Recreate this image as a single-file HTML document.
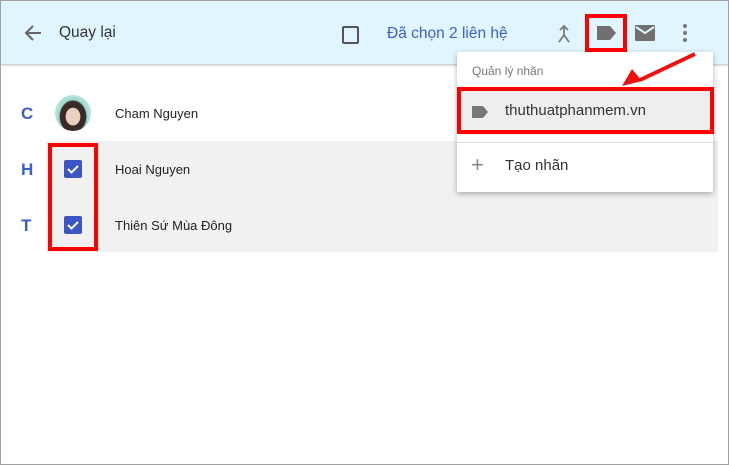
<!DOCTYPE html>
<html><head><meta charset="utf-8"><style>
*{margin:0;padding:0;box-sizing:border-box}
body{width:729px;height:465px;position:relative;background:#fff;font-family:"Liberation Sans",Arial,sans-serif;overflow:hidden}
.frame{position:absolute;left:0;top:0;width:729px;height:465px;border:1px solid #a0a0a0}
.hdr{position:absolute;left:1px;top:1px;width:727px;height:64px;background:#e1f5fe;border-bottom:1px solid #c8d4da;box-shadow:0 1px 2px rgba(0,0,0,.15)}
.t{position:absolute;white-space:nowrap}
.red{position:absolute;border:4px solid #ff0000}
.gray{position:absolute;left:46px;width:672px;background:#f1f1f1}
.letter{position:absolute;left:21px;font-weight:bold;color:#3c5fce;font-size:17px}
.name{position:absolute;left:115px;font-size:13px;color:#222}
.cb{position:absolute;left:64px;width:18px;height:18px;background:#3a56c7;border-radius:2px}
.menu{position:absolute;left:457px;top:52px;width:256px;height:140px;background:#fff;box-shadow:0 2px 6px rgba(0,0,0,.3);border-radius:2px}
</style></head><body>
<div class="hdr"></div>
<svg class="t" style="left:23px;top:23px" width="20" height="20" viewBox="0 0 20 20"><path d="M18 10H3M10 3L3 10l7 7" stroke="#666" stroke-width="2" fill="none"/></svg>
<div class="t" style="left:59px;top:24px;font-size:15.5px;color:#333">Quay lại</div>
<div class="t" style="left:342px;top:26px;width:17px;height:18px;border:2px solid #555;border-radius:2px"></div>
<div class="t" style="left:387px;top:25px;font-size:15.5px;color:#3b5fd0">Đã chọn 2 liên hệ</div>
<svg class="t" style="left:556px;top:24px" width="16" height="20" viewBox="0 0 16 20"><path d="M8 2v10M4 6l4-4 4 4M8 11l-5 7M8 11l5 7" stroke="#777" stroke-width="1.8" fill="none"/></svg>
<div class="red" style="left:585px;top:14px;width:42px;height:38px"></div>
<svg class="t" style="left:595px;top:25px" width="22" height="16" viewBox="0 0 22 16"><path d="M2 1h13l6 7-6 7H2z" fill="#707070"/></svg>
<svg class="t" style="left:634px;top:24px" width="22" height="18" viewBox="0 0 22 18"><rect x="1" y="1" width="20" height="16" rx="1" fill="#707070"/><path d="M2 3l9 6 9-6" stroke="#e1f5fe" stroke-width="2" fill="none"/></svg>
<svg class="t" style="left:681px;top:23px" width="8" height="20" viewBox="0 0 8 20"><circle cx="4" cy="3" r="2" fill="#777"/><circle cx="4" cy="10" r="2" fill="#777"/><circle cx="4" cy="17" r="2" fill="#777"/></svg>

<div class="gray" style="top:141px;height:111px"></div>
<div class="letter" style="top:104px">C</div>
<div class="letter" style="top:160px">H</div>
<div class="letter" style="top:216px">T</div>
<div class="t" style="left:55px;top:95px;width:36px;height:36px;border-radius:50%;background:radial-gradient(ellipse at 50% 60%,#e9d0c0 0 28%,#3a2a28 30% 50%,#9ad9cc 55%,#c9ece6 80%)"></div>
<div class="name" style="top:106px">Cham Nguyen</div>
<div class="name" style="top:162px">Hoai Nguyen</div>
<div class="name" style="top:218px">Thiên Sứ Mùa Đông</div>
<div class="cb" style="top:160px"></div><div class="cb" style="top:216px"></div>
<svg class="t" style="left:64px;top:160px" width="18" height="18"><path d="M4 9l3.5 3.5L14 6" stroke="#fff" stroke-width="2" fill="none"/></svg>
<svg class="t" style="left:64px;top:216px" width="18" height="18"><path d="M4 9l3.5 3.5L14 6" stroke="#fff" stroke-width="2" fill="none"/></svg>
<div class="red" style="left:48px;top:143px;width:50px;height:108px"></div>

<div class="menu">
<div class="t" style="left:15px;top:12px;font-size:12px;color:#777">Quản lý nhãn</div>
<div class="t" style="left:4px;top:38px;width:248px;height:45px;background:#eee"></div>
<div class="t" style="left:0;top:90px;width:256px;height:1px;background:#e0e0e0"></div>
<svg class="t" style="left:14px;top:53px" width="18" height="14" viewBox="0 0 18 14"><path d="M1 1h11l5 6-5 6H1z" fill="#777"/></svg>
<div class="t" style="left:48px;top:50px;font-size:15px;color:#333">thuthuatphanmem.vn</div>
<div class="t" style="left:14px;top:100px;font-size:22px;color:#888;font-weight:300">+</div>
<div class="t" style="left:48px;top:105px;font-size:15px;color:#333">Tạo nhãn</div>
</div>
<div class="red" style="left:457px;top:87px;width:257px;height:47px"></div>
<svg class="t" style="left:610px;top:50px" width="90" height="40" viewBox="0 0 90 40"><path d="M85 4L30 30" stroke="#ee1111" stroke-width="4"/><path d="M12 36l10-17 10 12z" fill="#ee1111"/></svg>
<div class="frame"></div>
</body></html>
